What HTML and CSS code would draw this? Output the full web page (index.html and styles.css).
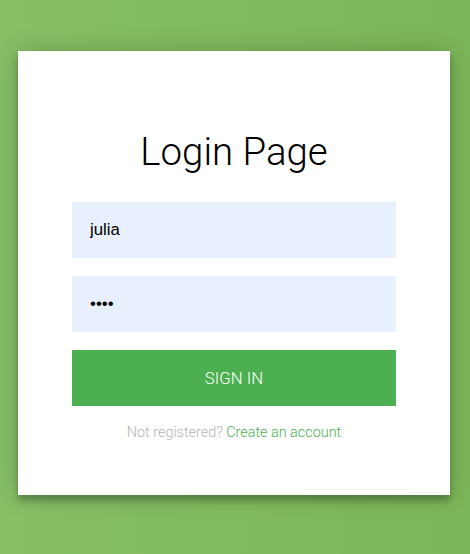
FILE: index.html
```html
<!DOCTYPE html>
<html>
<head>
<meta charset="utf-8">
<link rel="stylesheet" href="styles.css">
</head>
<body>
<div class="login-page">
  <form class="form">
    <h1 class="title">Login Page</h1>
    <input class="field" type="text" value="julia">
    <input class="field pw" type="password" value="abcd">
    <button class="btn" type="button">Sign in</button>
    <p class="message">Not registered? <a href="#">Create an account</a></p>
  </form>
</div>
</body>
</html>
```

FILE: styles.css
```css
html, body {
  margin: 0;
  height: 100%;
}
body {
  background: linear-gradient(to left, #7bb658, #86bf66);
  font-family: Roboto, "Liberation Sans", sans-serif;
  overflow: hidden;
}
.login-page {
  padding: 51px 0 0 18px;
}
.form {
  box-sizing: border-box;
  width: 432px;
  margin: 0;
  padding: 54px;
  background: #fff;
  text-align: center;
  box-shadow: 0 0 24px 0 rgba(0,0,0,0.2), 0 6px 6px 0 rgba(0,0,0,0.24);
}
.title {
  margin: 23px 0 26px;
  font-size: 38.4px;
  line-height: 48px;
  font-weight: 300;
  color: #000;
}
.field {
  display: block;
  box-sizing: border-box;
  width: 100%;
  height: 56px;
  margin: 0 0 18px;
  padding: 0 18px;
  border: 0;
  outline: 0;
  background: #e8f0fe;
  font-family: "Liberation Sans", Arial, sans-serif;
  font-size: 16.8px;
  color: #000;
}
.btn {
  display: block;
  width: 100%;
  height: 56px;
  border: 0;
  background: #4caf50;
  color: #fff;
  font-family: Roboto, sans-serif;
  font-weight: 300;
  font-size: 16.8px;
  text-transform: uppercase;
}
.message {
  margin: 18px 0 0;
  font-size: 14.4px;
  font-weight: 300;
  color: #b3b3b3;
}
.message a {
  color: #4caf50;
  text-decoration: none;
}
```
